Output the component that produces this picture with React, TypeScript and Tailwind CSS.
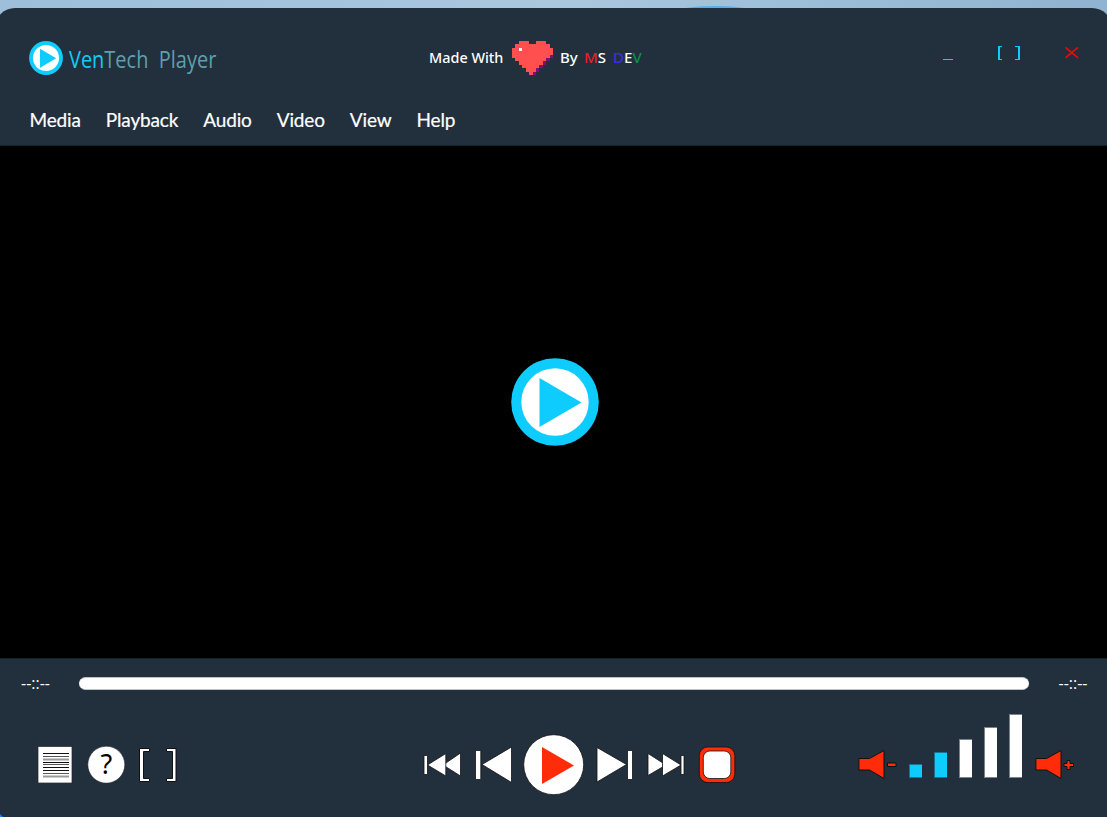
import React from "react";

const CYAN = "#0fccff";
const RED = "#ff2c0a";

const HEART: string[] = [
  "..xxx..xxx..",
  ".xxxxxxxxxx.",
  "xxwxxxxxxxxx",
  "xxxxxxxxxxxx",
  "xxxxxxxxxxxp",
  ".xxxxxxxxxp.",
  "..xxxxxxxp..",
  "...xxxxxp...",
  "....xxxp....",
  ".....xp.....",
];
const HEART_FILL: Record<string, string> = { x: "#ff4f4f", w: "#ffffff", p: "#7f0f74" };

function Heart() {
  return (
    <svg className="ml-[9px] h-[34px] w-[41px] shrink-0" viewBox="0 0 12 10" preserveAspectRatio="none" shapeRendering="crispEdges">
      {HEART.flatMap((row, y) =>
        row.split("").map((c, x) =>
          c === "." ? null : <rect key={`${x}-${y}`} x={x} y={y} width="1" height="1" fill={HEART_FILL[c]} />
        )
      )}
    </svg>
  );
}

function PlayBadge({ className }: { className: string }) {
  return (
    <svg className={className} viewBox="0 0 88 88">
      <circle cx="44" cy="44" r="43.8" fill={CYAN} />
      <circle cx="44" cy="44" r="33.7" fill="#fff" />
      <path d="M28.5 20 70.5 44.5 28.5 69Z" fill={CYAN} />
    </svg>
  );
}

function Speaker({ plus }: { plus?: boolean }) {
  return (
    <svg className="h-[32px] w-[40px] shrink-0" viewBox="0 0 40 32" fill={RED} stroke="#111" strokeWidth="1">
      <path d="M.9 9.500H11.500L26 1.500V29.500L11.500 21H.9Z" />
      {plus ? (
        <path d="M32 11.500h3v3h3.500v3h-3.500v3h-3v-3h-3v-3h3Z" />
      ) : (
        <path d="M29.500 14h8.500v3.500H29.500Z" />
      )}
    </svg>
  );
}

const MENU = ["Media", "Playback", "Audio", "Video", "View", "Help"];

function Header() {
  return (
    <header className="-mx-[5px] flex h-[138px] shrink-0 flex-col rounded-t-[20px] border-b border-[#17212a] bg-[#222f3c] px-[5px]">
      <div className="flex h-[84px] items-start">
        <div className="flex w-[429px] pt-[33px] pl-[29px]">
          <PlayBadge className="h-[34px] w-[34px] shrink-0" />
          <h1 className="ml-[6px] origin-left scale-x-[0.815] pt-px font-['Open_Sans',sans-serif] text-[24.5px] leading-[34px] font-normal whitespace-pre text-[#5f9fae]">
            <span className="text-[#0fccff]">Ven</span>Tech{"  "}Player
          </h1>
        </div>
        <div className="flex w-[501px] items-start pt-[32px] font-['Noto_Sans',sans-serif] text-[15px] leading-[34px] font-medium text-white">
          <span className="w-[74px] whitespace-nowrap"><span className="inline-block origin-left scale-x-[0.96]">Made With</span></span>
          <div className="pt-px"><Heart /></div>
          <span className="ml-[7px] w-[24px]">By</span>
          <span>
            <span className="text-[#ee1c25]">M</span>S
          </span>
          <span className="ml-[7px]">
            <span className="text-[#3a2fe0]">D</span>E<span className="text-[#079347]">V</span>
          </span>
        </div>
        <div className="flex flex-1 pt-[36px] pl-[13px]">
          <svg className="h-[18px] w-[140px]" viewBox="0 0 140 18" shapeRendering="crispEdges">
            <path d="M0 15h10v1H0Z" fill={CYAN} />
            <path d="M55 2h4v1h-2v12h2v1h-4ZM72 2h5v14h-5v-1h3V3h-3Z" fill={CYAN} />
            <path d="m122.500 3.300 12.500 10.500m0-10.500-12.500 10.500" stroke="#f00808" strokeWidth="1.7" shapeRendering="auto" />
          </svg>
        </div>
      </div>
      <nav className="flex gap-[25px] pt-[3px] pl-[29.5px] font-['Lato',sans-serif] text-[19px] leading-[50px] font-normal tracking-[-0.15px] text-white [-webkit-text-stroke:0.2px_white]">
        {MENU.map((m) => (
          <span key={m}>{m}</span>
        ))}
      </nav>
    </header>
  );
}

function TimeMark() {
  return (
    <span className="-mt-px w-[30px] font-['Open_Sans',sans-serif] text-[16px] leading-[20px] font-medium whitespace-nowrap text-white">--::--</span>
  );
}

function Transport() {
  return (
    <svg className="mt-[25px] ml-[244px] h-[62px] w-[314px] shrink-0" viewBox="423 734 314 62" fill="#fff" stroke="#111" strokeWidth=".8">
      <path d="M424 755.500h3.500v19H424Z" />
      <path d="M443 765l17.500-12v23Z" />
      <path d="M427.500 765 445.800 753.500v22.500Z" />
      <path d="M475.500 750.500h5.300v29h-5.300ZM482 764.500l29.500-17.500v35.500Z" />
      <circle cx="553.700" cy="764.700" r="30" />
      <path d="M542 747 574 765.500 542 784Z" fill={RED} stroke="none" />
      <path d="M597 747.500 626.500 764.500 597 782ZM627.500 750.500h5v29h-5Z" />
      <path d="M648 753.500 666 765 648 775.500Z" />
      <path d="M662.500 753.500 681 765 662.500 776ZM681 755.500h3v19H681Z" />
      <rect x="699.300" y="747" width="35.500" height="35.500" rx="8.500" fill={RED} />
      <rect x="703.300" y="751" width="27.500" height="27.500" rx="6.500" />
    </svg>
  );
}

const BARS = [
  { h: 14, on: true },
  { h: 26, on: true },
  { h: 39, on: false },
  { h: 51, on: false },
  { h: 64, on: false },
];

function Volume() {
  return (
    <div className="ml-[121px] flex h-[72px] items-end">
      <Speaker />
      <div className="mr-[12.5px] mb-[3px] ml-[11px] flex items-end gap-[12px]">
        {BARS.map((b) => (
          <div
            key={b.h}
            className={b.on ? "w-[13px] border border-r-0 border-[#177391] bg-[#0fccff]" : "w-[13px] border border-r-0 border-[#7a828a] bg-white"}
            style={{ height: b.h }}
          />
        ))}
      </div>
      <Speaker plus />
    </div>
  );
}

export default function App() {
  return (
    <div className="relative flex h-[817px] w-[1107px] flex-col overflow-hidden bg-linear-to-r from-[#9dbfd9] via-[#a9c8de] to-[#8fb3d0] pt-[8px]">
      <div className="absolute top-[6px] left-[685px] h-[6px] w-[60px] rounded-[50%] bg-[#55aef0]" />
      <div className="relative flex flex-1 flex-col">
        <Header />
        <main className="flex h-[512px] shrink-0 items-center justify-center bg-black pl-[2px]">
          <PlayBadge className="h-[88px] w-[88px]" />
        </main>
        <footer className="flex h-[159px] flex-col border-t border-[#17212a] bg-[#222f3c]">
          <div className="flex h-[50px] items-start pt-[15px] pl-[21px]">
            <TimeMark />
            <div className="mr-[29.5px] ml-[28px] mt-[3px] h-[13px] w-[950px] rounded-full border-y border-[#b9c4cc] bg-white" />
            <TimeMark />
          </div>
          <div className="flex h-[108px] items-start pl-[37px]">
            <svg className="mt-[34px] h-[40px] w-[142px] shrink-0" viewBox="37 743 142 40">
              <path d="M38 746.500h34V783H38Z" fill="#fff" stroke="#222" strokeWidth=".7" />
              <path d="M43 753.500h26M43 762.500h26M43 767.500h26M43 770.500h26" stroke="#111" />
              <path d="M43 756.500h26M43 764.500h26M43 773.500h26" stroke="#555" />
              <path d="M43 759.500h26M43 776.500h26" stroke="#999" strokeWidth="2" />
              <circle cx="106.300" cy="764.700" r="18.500" fill="#fff" stroke="#222" strokeWidth=".6" />
              <text x="106.300" y="774" textAnchor="middle" fontFamily="Noto Sans, sans-serif" fontSize="27" fontWeight="400">?</text>
              <path d="M139.500 748.500h10v3h-6v27h6v3h-10ZM166.500 748.500h9.500v33h-9.500v-3h6v-27h-6Z" fill="#fff" stroke="#111" />
            </svg>
            <Transport />
            <Volume />
          </div>
        </footer>
        <svg className="absolute bottom-0 left-0 h-[3px] w-[3px]" viewBox="0 0 3 3">
          <path d="M0 0 3 3H0Z" fill="#1677ff" />
        </svg>
      </div>
    </div>
  );
}
